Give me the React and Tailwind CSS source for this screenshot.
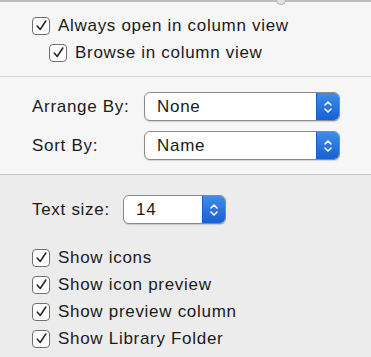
import React from "react";

function Check({ label, indent }) {
  return (
    <label className={`flex items-center h-[27px] ${indent ? "pl-[49px]" : "pl-[32px]"}`}>
      <span className="w-[18px] h-[18px] rounded-[4px] border border-[#707070] bg-white flex items-center justify-center shrink-0">
        <svg width="13" height="13" viewBox="0 0 13 13">
          <path d="M2.2 7 L5.2 10.5 L10.8 2" fill="none" stroke="#222" strokeWidth="1.5" strokeLinecap="round" strokeLinejoin="round" />
        </svg>
      </span>
      <span className="ml-[8px] text-[17px] tracking-[0.7px] text-[#1b1b1b] leading-none">{label}</span>
    </label>
  );
}

function Popup({ value, width }) {
  return (
    <div className={`flex h-[29px] ${width} rounded-[6px] border border-[#8a8a8a] bg-white overflow-hidden shadow-[0_1px_1px_rgba(0,0,0,0.15)]`}>
      <span className="flex-1 pl-[12px] flex items-center text-[17px] tracking-[0.7px] text-[#1b1b1b]">{value}</span>
      <span className="w-[23px] bg-gradient-to-b from-[#3f8ce8] to-[#1660d3] flex items-center justify-center border-l border-[#1d5fc1]">
        <svg width="10" height="16" viewBox="0 0 10 16">
          <path d="M2 6 L5 3 L8 6 M2 10 L5 13 L8 10" fill="none" stroke="white" strokeWidth="1.6" strokeLinecap="round" strokeLinejoin="round" />
        </svg>
      </span>
    </div>
  );
}

export default function App() {
  return (
    <div className="w-[371px] h-[357px] bg-[#ececec] relative overflow-hidden" style={{ fontFamily: "'Liberation Sans', Arial, sans-serif" }}>
      <div className="h-[2px] bg-[#bdbdbd]" />
      <div className="absolute left-[276px] top-0 w-[10px] h-[5px] rounded-b-full bg-[#e0e0e0] border border-t-0 border-[#b0b0b0]" />

      <div className="bg-[#f6f6f6] pt-[10px] h-[75px] border-b border-[#d3d3d3]">
        <Check label="Always open in column view" />
        <Check label="Browse in column view" indent />
      </div>

      <div className="bg-[#f6f6f6] pt-[15px] h-[98px] border-b border-[#c4c4c4]">
        <div className="flex items-center pl-[32px] h-[29px]">
          <span className="w-[112px] text-[17px] tracking-[0.7px] text-[#1b1b1b]">Arrange By:</span>
          <Popup value="None" width="w-[196px]" />
        </div>
        <div className="flex items-center pl-[32px] h-[29px] mt-[10px]">
          <span className="w-[112px] text-[17px] tracking-[0.7px] text-[#1b1b1b]">Sort By:</span>
          <Popup value="Name" width="w-[196px]" />
        </div>
      </div>

      <div className="pt-[20px]">
        <div className="flex items-center pl-[32px] h-[29px]">
          <span className="w-[91px] text-[17px] tracking-[0.7px] text-[#1b1b1b]">Text size:</span>
          <Popup value="14" width="w-[103px]" />
        </div>
        <div className="mt-[20px]">
          <Check label="Show icons" />
          <Check label="Show icon preview" />
          <Check label="Show preview column" />
          <Check label="Show Library Folder" />
        </div>
      </div>
    </div>
  );
}
